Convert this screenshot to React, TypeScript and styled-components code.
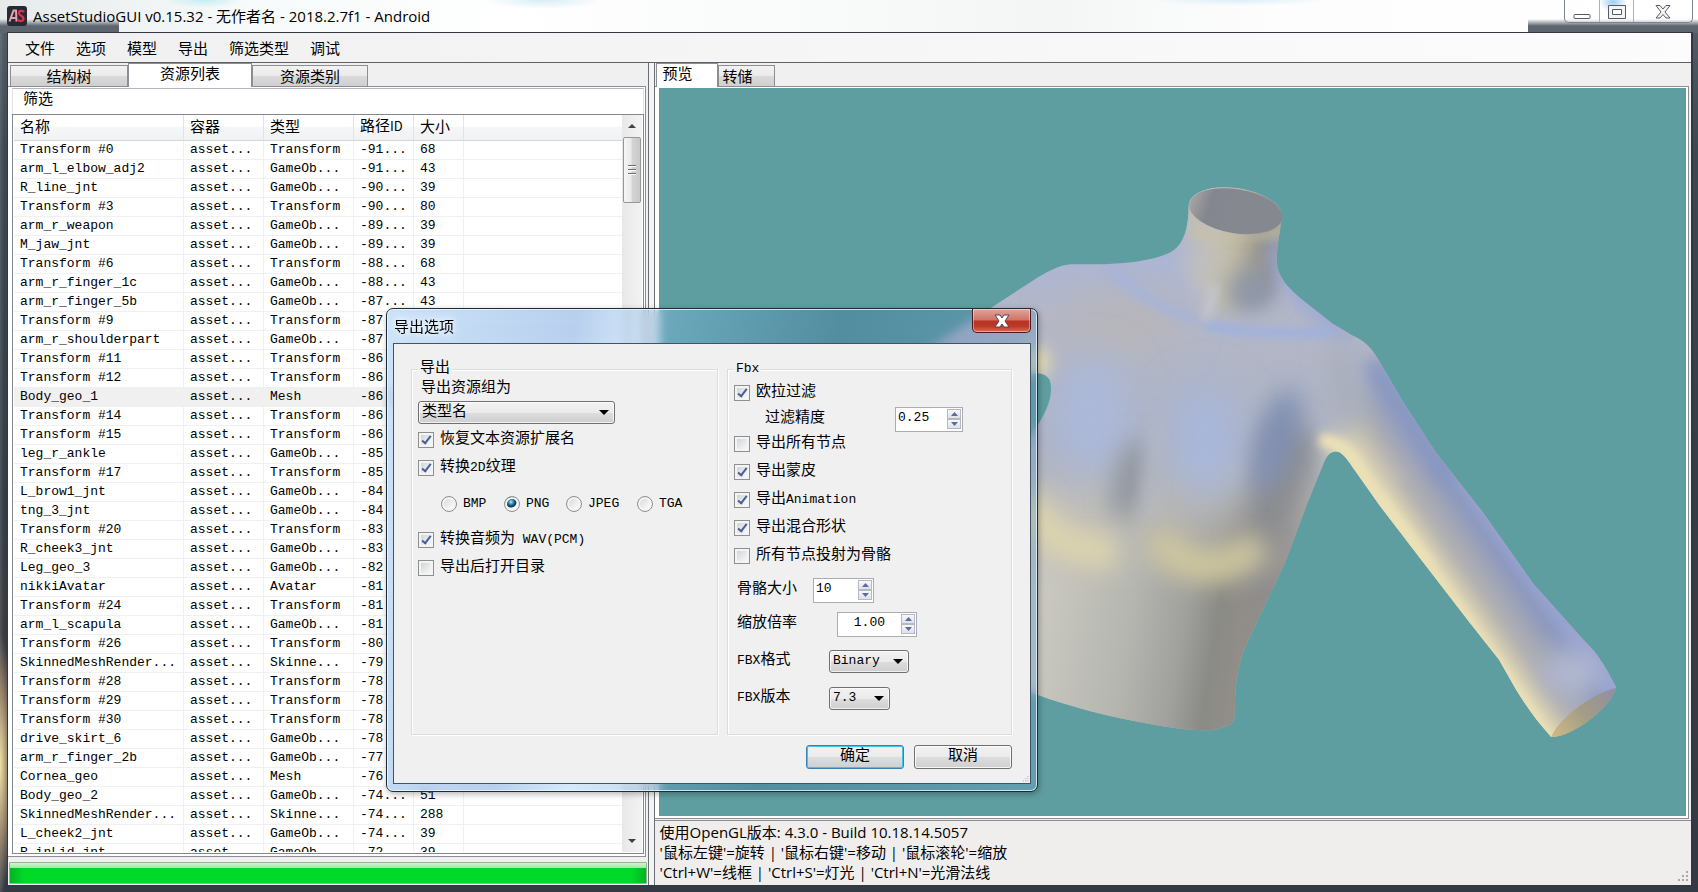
import React from 'react';
import styled, { createGlobalStyle, css } from 'styled-components';

const uiFont = `"Open Sans", "Noto Sans CJK SC", sans-serif`;
const gridFont = `"Liberation Mono", "Noto Sans CJK SC", monospace`;

const GlobalStyle = createGlobalStyle`
  *, *::before, *::after { box-sizing: border-box; }
  body { margin: 0; background: #3b454f; color: #000; font-family: ${gridFont}; font-size: 13px; }
  button, input, select { font: inherit; color: inherit; margin: 0; }
`;

const Desktop = styled.div`
  position: relative;
  display: flex;
  flex-direction: column;
  height: 100vh;
  min-height: 800px;
  padding: 0 5px 6px 7px;
  overflow: hidden;
  background:
    radial-gradient(ellipse 14px 130px at 0 765px, #efe3a6, rgba(190, 160, 120, 0.7) 55%, transparent),
    linear-gradient(90deg, rgba(255, 255, 255, 0.12), transparent 4px),
    linear-gradient(180deg, #56616a 0, #3c4852 150px, #323d48 500px, #3a3b42 620px, #333a44 100%);
`;

const TitleGlass = styled.div`
  position: absolute;
  inset: 0 0 auto 0;
  height: 33px;
  background:
    radial-gradient(ellipse 40px 8px at 12% 0, #c4eef2, transparent),
    radial-gradient(ellipse 60px 9px at 32% 0, #d6eef4, transparent),
    radial-gradient(ellipse 90px 6px at 73% 0, #dceff6, transparent),
    radial-gradient(ellipse 14px 10px at 95% 2px, #6fb4ee, transparent),
    linear-gradient(90deg, #e6eaeb 0, #f6fafa 14%, #ffffff 30%, #f4f6f6 62%, #fdfdfd 75%, #ffffff 100%);
  &::before, &::after {
    content: '';
    position: absolute;
    bottom: 0;
    height: 14px;
    background: linear-gradient(180deg, rgba(85, 94, 102, 0), #5d666e 50%);
  }
  &::before { left: 0; width: 119px; }
  &::after { right: 0; width: 170px; }
`;

const TitleBar = styled.header`
  position: relative;
  display: flex;
  align-items: flex-start;
  flex: 0 0 32px;
`;

const Title = styled.h1`
  flex: 1;
  display: flex;
  align-items: center;
  gap: 6px;
  height: 32px;
  margin: 0;
  font: 400 15px/20px ${uiFont};
  white-space: nowrap;
`;

const WindowButtons = styled.div`
  display: flex;
  height: 23px;
  border: 1px solid #7b828b;
  border-top: 0;
  border-radius: 0 0 5px 5px;
  background: rgba(255, 255, 255, 0.35);
  overflow: hidden;
`;

const WindowButton = styled.button<{ $wide?: boolean }>`
  width: ${p => (p.$wide ? 59 : 34)}px;
  padding: 0;
  border: 0;
  border-left: 1px solid #a9b1ba;
  background: transparent;
  &:first-child { border-left: 0; }
  svg { display: block; margin: 0 auto; }
`;

const Client = styled.div`
  position: relative;
  flex: 1;
  min-height: 0;
  display: flex;
  flex-direction: column;
  border: 1px solid #32383e;
  border-right-width: 2px;
  background: #f0f0f0;
`;

const MenuBar = styled.nav`
  display: flex;
  align-items: center;
  flex: 0 0 30px;
  gap: 21px;
  padding-left: 17px;
  border-bottom: 1px solid #5e6165;
  background: linear-gradient(90deg, #f0f0f0, #fcfcfc);
`;

const MenuItem = styled.button`
  padding: 0;
  border: 0;
  background: none;
  font: 15px/20px "Noto Sans CJK SC", sans-serif;
`;

const Split = styled.main`
  flex: 1;
  min-height: 0;
  display: grid;
  grid-template-columns: minmax(0, 641fr) minmax(0, 1038fr);
  gap: 5px;
  background: #f4f4f4;
`;

const Pane = styled.section<{ $side: 'left' | 'right' }>`
  display: flex;
  flex-direction: column;
  min-height: 0;
  background: #f0f0f0;
  ${p => (p.$side === 'left'
    ? css`border-right: 1px solid #6b6e72;`
    : css`border-left: 1px solid #6b6e72;`)}
`;

const TabStrip = styled.div<{ $inset?: boolean }>`
  display: flex;
  align-items: flex-end;
  flex: 0 0 23px;
  padding-left: ${p => (p.$inset ? 2 : 1)}px;
`;

const Tab = styled.button<{ $active?: boolean; $width: number; $left?: boolean }>`
  width: ${p => p.$width}px;
  height: ${p => (p.$active ? 24 : 21)}px;
  padding: ${p => (p.$active ? '0 6px 5px' : '0 4px 1px')};
  border: 1px solid #8c8e94;
  border-bottom: 0;
  font: 15px/18px "Noto Sans CJK SC", sans-serif;
  text-align: ${p => (p.$left ? 'left' : 'center')};
  background: ${p => (p.$active ? '#fff' : 'linear-gradient(180deg, #f2f2f2, #ebebeb 50%, #dadada 52%, #cfcfcf)')};
  position: relative;
  z-index: ${p => (p.$active ? 1 : 0)};
  margin-bottom: ${p => (p.$active ? -1 : 0)}px;
`;

const ListPanel = styled.div`
  flex: 1;
  min-height: 0;
  display: flex;
  flex-direction: column;
  margin-right: 2px;
  padding: 1px 1px 2px 4px;
  border: 1px solid #8c8e94;
  border-left: 0;
  background: #fff;
`;

const FilterBox = styled.input`
  flex: 0 0 25px;
  width: 100%;
  padding: 0 10px 7px;
  border: 0;
  border-top: 1px solid #b4b8be;
  border-left: 1px solid #e2e3ea;
  border-right: 1px solid #e2e3ea;
  outline: 0;
  background: #fff;
  && { font: 15px/18px "Noto Sans CJK SC", sans-serif; }
  &::placeholder { color: #000; opacity: 1; }
`;

const ListView = styled.div`
  flex: 1;
  min-height: 0;
  display: flex;
  border: 1px solid #828790;
  padding: 0 1px 1px;
`;

const TableClip = styled.div`
  flex: 1;
  min-width: 0;
  overflow: hidden;
`;

const AssetTable = styled.table`
  width: 100%;
  table-layout: fixed;
  border-collapse: separate;
  border-spacing: 0;
`;

const HeadCell = styled.th`
  height: 26px;
  padding: 0 6px 4px;
  border-right: 1px solid #e0e3e8;
  border-bottom: 1px solid #d5d5d5;
  background: linear-gradient(180deg, #fff 0, #fff 45%, #f5f6f8 50%, #f1f2f4 100%);
  font: 400 15px/20px "Noto Sans CJK SC", sans-serif;
  text-align: left;
  white-space: nowrap;
  &:last-child { border-right: 0; }
`;

const Row = styled.tr<{ $selected?: boolean }>`
  background: ${p => (p.$selected ? '#f0f0f0' : '#fff')};
`;

const Cell = styled.td`
  height: 19px;
  padding: 0 0 0 6px;
  border-right: 1px solid #f0f0f0;
  border-bottom: 1px solid #f0f0f0;
  line-height: 18px;
  white-space: nowrap;
  overflow: hidden;
  &:last-child { border-right: 0; }
`;

const ScrollTrack = styled.div`
  flex: 0 0 20px;
  display: flex;
  flex-direction: column;
  align-items: center;
  background: linear-gradient(90deg, #e8e8e8, #f3f3f3);
`;

const ScrollArrow = styled.button`
  width: 18px;
  height: 22px;
  padding: 0;
  border: 0;
  background: none;
  svg { display: block; margin: 0 auto; }
`;

const ScrollThumb = styled.div`
  display: flex;
  flex-direction: column;
  justify-content: center;
  align-items: center;
  gap: 2px;
  width: 18px;
  height: 66px;
  margin-bottom: auto;
  border: 1px solid #979797;
  border-radius: 2px;
  background: linear-gradient(90deg, #f6f6f6, #e9e9e9 45%, #d4d4d4 50%, #c9c9cb);
`;

const Grip = styled.span`
  width: 8px;
  height: 2px;
  border-top: 1px solid #6c6c6c;
  background: #fff;
`;

const ProgressBar = styled.div`
  flex: 0 0 22px;
  margin: 5px 1px 1px;
  border: 1px solid #8fb88f;
  border-radius: 1px;
  background:
    linear-gradient(180deg, #d3f5d3 0, #9ceb9f 5px, transparent 5px),
    linear-gradient(90deg, #05b322, #00d928 14px, #00d928 calc(100% - 14px), #05b322);
`;

const Viewport = styled.div`
  flex: 1;
  min-height: 0;
  display: flex;
  margin-right: 2px;
  border: 1px solid #8c8e94;
  border-left: 0;
  padding: 1px 2px 2px 4px;
  background: #fff;
  svg { display: block; flex: 1; min-width: 0; height: 100%; background: #5f9ea0; }
`;

const StatusBox = styled.output`
  position: relative;
  flex: 0 0 65px;
  margin-top: 1px;
  padding: 1px 5px;
  border-top: 1px solid #8c8e94;
  background: #f0eeed;
  font: 15px/20px ${uiFont};
  white-space: pre-line;
  svg { position: absolute; right: 2px; bottom: 3px; }
`;

const Dialog = styled.form`
  position: absolute;
  left: 386px;
  top: 308px;
  width: 652px;
  padding: 0 6px 7px;
  border: 1px solid #1f2c38;
  border-radius: 7px;
  background: linear-gradient(100deg, rgba(130, 185, 240, 0.4), rgba(80, 140, 215, 0.4) 26%, rgba(140, 195, 245, 0.35) 36%, rgba(60, 110, 160, 0.35) 62%, rgba(110, 160, 205, 0.35));
  backdrop-filter: blur(5px);
  box-shadow: inset 0 0 0 1px rgba(235, 248, 255, 0.8), 1px 2px 6px rgba(0, 0, 0, 0.3);
`;

const DialogTitle = styled.div`
  display: flex;
  justify-content: space-between;
  height: 34px;
  h2 {
    margin: 0 1px;
    font: 400 15px/34px "Noto Sans CJK SC", sans-serif;
    text-shadow: 0 0 8px #fff, 0 0 8px #fff;
  }
`;

const CloseButton = styled.button`
  width: 59px;
  height: 24px;
  padding: 0;
  border: 1px solid #4a1c20;
  border-top: 0;
  border-radius: 0 0 5px 5px;
  background: linear-gradient(180deg, #e0a69c 0, #cf7265 48%, #bb3222 52%, #b93a29 75%, #d86d50 100%);
  box-shadow: inset 0 0 0 1px rgba(255, 255, 255, 0.4);
  svg { display: block; margin: 0 auto; }
`;

const DialogBody = styled.div`
  position: relative;
  padding: 16px 18px 14px 17px;
  border: 1px solid #3f5468;
  background: #f0f0f0;
  > svg { position: absolute; right: 1px; bottom: 1px; }
`;

const Groups = styled.div`
  display: grid;
  grid-template-columns: 307fr 285fr;
  gap: 9px;
`;

const Group = styled.fieldset`
  min-width: 0;
  margin: 0;
  padding: 0 6px 22px;
  border: 1px solid #dcdcdc;
  box-shadow: inset 1px 1px 0 #fff, 1px 1px 0 #fff;
  font: 15px/18px ${gridFont};
  legend { padding: 0 2px; line-height: 18px; background: #f0f0f0; }
`;

const Line = styled.div<{ $h: number; $indent?: number }>`
  display: flex;
  align-items: center;
  height: ${p => p.$h}px;
  padding-left: ${p => p.$indent ?? 0}px;
`;

const FieldLabel = styled.label<{ $w?: number }>`
  flex: 0 0 ${p => (p.$w ? `${p.$w}px` : 'auto')};
  white-space: nowrap;
`;

const CheckLabel = styled.label`
  display: flex;
  align-items: center;
  gap: 6px;
  white-space: nowrap;
`;

const Latin = styled.span`
  font-size: 13px;
`;

const CheckBox = styled.input.attrs({ type: 'checkbox' })`
  appearance: none;
  position: relative;
  width: 16px;
  height: 16px;
  border: 1px solid #8e8f8f;
  background: linear-gradient(135deg, #c9ced4, #f6f6f6 80%);
  box-shadow: inset 0 0 0 2px #f4f4f4;
  &:checked::after {
    content: '';
    position: absolute;
    left: 5px;
    top: 1px;
    width: 5px;
    height: 10px;
    border: solid #4a5f97;
    border-width: 0 2px 2px 0;
    transform: rotate(38deg);
  }
`;

const Radio = styled.input.attrs({ type: 'radio' })`
  appearance: none;
  width: 16px;
  height: 16px;
  border: 1px solid #8e8f8f;
  border-radius: 50%;
  background: linear-gradient(135deg, #d0d3d7, #f8f8f8 75%);
  box-shadow: inset 0 0 0 2px #f4f4f4;
  &:checked {
    background: radial-gradient(circle at 6px 5px, #b8ecfa 0, #3f9dc4 2px, #144a6b 4px, #0f3450 5px, #f4f4f4 6px);
  }
`;

const RadioRow = styled.div`
  display: grid;
  grid-template-columns: 63px 62px 71px auto;
  align-items: center;
  height: 44px;
  padding-left: 23px;
`;

const SelectWrap = styled.span<{ $w: number }>`
  position: relative;
  display: block;
  width: ${p => p.$w}px;
  svg { position: absolute; right: 6px; top: 9px; pointer-events: none; }
`;

const Select = styled.select<{ $latin?: boolean }>`
  appearance: none;
  display: block;
  width: 100%;
  height: 23px;
  padding: 0 3px;
  border: 1px solid #707070;
  border-radius: 3px;
  background: linear-gradient(180deg, #f2f2f2, #ebebeb 50%, #dddddd 52%, #cfcfcf);
  box-shadow: inset 0 0 0 1px rgba(255, 255, 255, 0.7);
  && { font-size: ${p => (p.$latin ? 13 : 15)}px; line-height: 20px; }
`;

const SpinBox = styled.span<{ $w: number }>`
  display: flex;
  width: ${p => p.$w}px;
  height: 25px;
  padding: 1px;
  border: 1px solid #abadb3;
  background: #fff;
`;

const SpinInput = styled.input<{ $right?: boolean }>`
  flex: 1;
  min-width: 0;
  height: 18px;
  padding: 0 ${p => (p.$right ? 16 : 1)}px 0 1px;
  border: 0;
  outline: 0;
  background: none;
  text-align: ${p => (p.$right ? 'right' : 'left')};
  && { font-size: 13px; }
`;

const SpinButtons = styled.span`
  display: flex;
  flex-direction: column;
  width: 14px;
`;

const SpinButton = styled.button`
  height: 10px;
  padding: 0;
  border: 1px solid #b5b9c4;
  background: linear-gradient(180deg, #f8f8fa, #dfe1ea);
  svg { display: block; margin: 0 auto; }
`;

const DialogActions = styled.div`
  display: flex;
  justify-content: flex-end;
  gap: 10px;
  margin-top: 10px;
`;

const ActionButton = styled.button<{ $primary?: boolean }>`
  width: 98px;
  height: 24px;
  padding: 0;
  border: 1px solid ${p => (p.$primary ? '#3c7fb1' : '#707070')};
  border-radius: 3px;
  background: linear-gradient(180deg, #f2f2f2, #ebebeb 50%, #dddddd 52%, #cfcfcf);
  box-shadow: inset 0 0 0 ${p => (p.$primary ? '1px #3fc4ee' : '1px rgba(255, 255, 255, 0.8)')};
  && { font-size: 15px; line-height: 20px; }
`;

type Asset = [name: string, type: string, path: string, size: string];

const assets: Asset[] = [
  ['Transform #0', 'Transform', '-91...', '68'],
  ['arm_l_elbow_adj2', 'GameOb...', '-91...', '43'],
  ['R_line_jnt', 'GameOb...', '-90...', '39'],
  ['Transform #3', 'Transform', '-90...', '80'],
  ['arm_r_weapon', 'GameOb...', '-89...', '39'],
  ['M_jaw_jnt', 'GameOb...', '-89...', '39'],
  ['Transform #6', 'Transform', '-88...', '68'],
  ['arm_r_finger_1c', 'GameOb...', '-88...', '43'],
  ['arm_r_finger_5b', 'GameOb...', '-87...', '43'],
  ['Transform #9', 'Transform', '-87', ''],
  ['arm_r_shoulderpart', 'GameOb...', '-87', ''],
  ['Transform #11', 'Transform', '-86', ''],
  ['Transform #12', 'Transform', '-86', ''],
  ['Body_geo_1', 'Mesh', '-86', ''],
  ['Transform #14', 'Transform', '-86', ''],
  ['Transform #15', 'Transform', '-86', ''],
  ['leg_r_ankle', 'GameOb...', '-85', ''],
  ['Transform #17', 'Transform', '-85', ''],
  ['L_brow1_jnt', 'GameOb...', '-84', ''],
  ['tng_3_jnt', 'GameOb...', '-84', ''],
  ['Transform #20', 'Transform', '-83', ''],
  ['R_cheek3_jnt', 'GameOb...', '-83', ''],
  ['Leg_geo_3', 'GameOb...', '-82', ''],
  ['nikkiAvatar', 'Avatar', '-81', ''],
  ['Transform #24', 'Transform', '-81', ''],
  ['arm_l_scapula', 'GameOb...', '-81', ''],
  ['Transform #26', 'Transform', '-80', ''],
  ['SkinnedMeshRender...', 'Skinne...', '-79', ''],
  ['Transform #28', 'Transform', '-78', ''],
  ['Transform #29', 'Transform', '-78', ''],
  ['Transform #30', 'Transform', '-78', ''],
  ['drive_skirt_6', 'GameOb...', '-78', ''],
  ['arm_r_finger_2b', 'GameOb...', '-77', ''],
  ['Cornea_geo', 'Mesh', '-76', ''],
  ['Body_geo_2', 'GameOb...', '-74...', '51'],
  ['SkinnedMeshRender...', 'Skinne...', '-74...', '288'],
  ['L_cheek2_jnt', 'GameOb...', '-74...', '39'],
  ['R_inLid_jnt', 'GameOb...', '-72...', '39'],
];

function Mixed({ text }: { text: string }) {
  return (
    <span>
      {text.split(/([\x20-\x7e]+)/).map((part, i) => (i % 2 ? <Latin key={i}>{part}</Latin> : part))}
    </span>
  );
}

function Check({ text, checked }: { text: string; checked?: boolean }) {
  return (
    <CheckLabel>
      <CheckBox defaultChecked={checked} />
      <Mixed text={text} />
    </CheckLabel>
  );
}

function Triangle({ up, w = 9, fill = '#000' }: { up?: boolean; w?: number; fill?: string }) {
  const h = Math.ceil(w / 2);
  return (
    <svg width={w} height={h} aria-hidden="true">
      <path d={up ? `M0 ${h}L${w / 2} 0L${w} ${h}Z` : `M0 0H${w}L${w / 2} ${h}Z`} fill={fill} />
    </svg>
  );
}

function DropDown({ id, value, width, latin }: { id: string; value: string; width: number; latin?: boolean }) {
  return (
    <SelectWrap $w={width}>
      <Select id={id} $latin={latin} defaultValue={value}>
        <option>{value}</option>
      </Select>
      <Triangle w={10} />
    </SelectWrap>
  );
}

function Spinner({ id, value, width, right }: { id: string; value: string; width: number; right?: boolean }) {
  return (
    <SpinBox $w={width}>
      <SpinInput id={id} defaultValue={value} $right={right} />
      <SpinButtons>
        <SpinButton type="button" aria-label="+"><Triangle up w={7} fill="#5a6aa4" /></SpinButton>
        <SpinButton type="button" aria-label="-"><Triangle w={7} fill="#5a6aa4" /></SpinButton>
      </SpinButtons>
    </SpinBox>
  );
}

function SizeGrip({ color = '#a8a8a8', size = 11 }: { color?: string; size?: number }) {
  const dots = [[8, 0], [4, 4], [8, 4], [0, 8], [4, 8], [8, 8]];
  return (
    <svg width={size} height={size} viewBox="0 0 11 11" aria-hidden="true">
      {dots.map(([x, y]) => <rect key={`${x}-${y}`} x={x} y={y} width="2" height="2" fill={color} />)}
    </svg>
  );
}

function AppLogo() {
  return (
    <svg width="20" height="20" viewBox="0 0 20 20" aria-hidden="true">
      <rect width="20" height="20" rx="3" fill="#262a33" />
      <path d="M2.5 15.5L6.5 4.5H9L9.5 15.5M4 12H9" fill="none" stroke="#e8a0ad" strokeWidth="2" />
      <path d="M17 6C15.500 4 11.500 4.500 12 7.500C12.500 10 16.500 9.500 16.500 12.500C16.500 15.500 12 15.800 10.800 13.500" fill="none" stroke="#e02f4e" strokeWidth="2.200" />
    </svg>
  );
}

const torsoPath =
  'M1189 205C1189 228 1184 243 1174 250C1158 260 1130 263 1105 264H1071C1058 265 1048 272 1040 276L991 308L880 380V460L1000 440L1020 600V688L1038 694C1070 706 1110 716 1149 723C1175 728 1195 730 1212 729C1228 727 1235 723 1235 714C1235 695 1236 680 1239 666C1243 650 1247 643 1252 632L1286 560L1307 504L1324 462C1328 452 1334 449 1340 452C1346 456 1350 463 1355 470L1379 504L1422 560L1469 621L1499 659L1516 689C1527 707 1538 722 1551 736C1570 736 1608 710 1616 687C1608 672 1600 655 1584 640L1533 583L1482 511L1435 451L1401 398L1377 357C1372 348 1364 340 1352 335L1332 323L1303 300C1288 288 1277 275 1277 262C1276 250 1280 235 1282 215C1280 195 1235 182 1208 189C1194 193 1190 198 1189 205Z';

function SoftBlur({ level }: { level: number }) {
  return (
    <filter id={`b${level}`} filterUnits="userSpaceOnUse" x="800" y="100" width="900" height="720">
      <feGaussianBlur stdDeviation={level} />
    </filter>
  );
}

function TorsoPreview() {
  return (
    <svg viewBox="659 88 1028 727" preserveAspectRatio="xMidYMid slice" role="img">
      <defs>
        <linearGradient id="base" gradientUnits="userSpaceOnUse" x1="0" y1="250" x2="0" y2="730">
          <stop offset="0" stopColor="#abb5d5" />
          <stop offset="0.14" stopColor="#b4b7c6" />
          <stop offset="0.4" stopColor="#adb3c4" />
          <stop offset="0.54" stopColor="#bcbbb8" />
          <stop offset="1" stopColor="#b3b2b0" />
        </linearGradient>
        <linearGradient id="side" gradientUnits="userSpaceOnUse" x1="1040" y1="600" x2="1240" y2="632">
          <stop offset="0" stopColor="#cac8c1" />
          <stop offset="0.45" stopColor="#b5b6b0" />
          <stop offset="0.72" stopColor="#a0a19d" />
          <stop offset="0.88" stopColor="#8a8b86" />
          <stop offset="1" stopColor="#918d88" />
        </linearGradient>
        <linearGradient id="fade" gradientUnits="userSpaceOnUse" x1="0" y1="470" x2="0" y2="590">
          <stop offset="0" stopColor="#000" />
          <stop offset="1" stopColor="#fff" />
        </linearGradient>
        <mask id="lower" maskUnits="userSpaceOnUse" x="860" y="180" width="800" height="600">
          <rect x="860" y="180" width="800" height="600" fill="url(#fade)" />
        </mask>
        <linearGradient id="neck" gradientUnits="userSpaceOnUse" x1="1182" y1="250" x2="1280" y2="262">
          <stop offset="0" stopColor="#b5b9ca" />
          <stop offset="0.3" stopColor="#c4c1ba" />
          <stop offset="0.55" stopColor="#c0bba3" />
          <stop offset="0.75" stopColor="#969590" />
          <stop offset="1" stopColor="#9294a0" />
        </linearGradient>
        <linearGradient id="arm" gradientUnits="userSpaceOnUse" x1="1422" y1="560" x2="1486" y2="515">
          <stop offset="0" stopColor="#eee3ba" />
          <stop offset="0.16" stopColor="#d8cfb2" />
          <stop offset="0.36" stopColor="#b4b3b0" />
          <stop offset="0.62" stopColor="#a0a5b6" />
          <stop offset="0.84" stopColor="#8a98be" />
          <stop offset="1" stopColor="#98a3cf" />
        </linearGradient>
        <linearGradient id="cuff" gradientUnits="userSpaceOnUse" x1="1555" y1="733" x2="1612" y2="690">
          <stop offset="0" stopColor="#c9b885" />
          <stop offset="0.5" stopColor="#a39c85" />
          <stop offset="1" stopColor="#9290a0" />
        </linearGradient>
        <linearGradient id="hollow" gradientUnits="userSpaceOnUse" x1="1189" y1="205" x2="1230" y2="212">
          <stop offset="0" stopColor="#a9a5a0" />
          <stop offset="0.5" stopColor="#83868f" />
          <stop offset="1" stopColor="#85888f" />
        </linearGradient>
        {[4, 8, 12, 20].map(level => <SoftBlur key={level} level={level} />)}
        <clipPath id="torso"><path d={torsoPath} /></clipPath>
      </defs>
      <g clipPath="url(#torso)">
        <rect x="860" y="170" width="800" height="600" fill="url(#base)" />
        <g mask="url(#lower)"><rect x="860" y="460" width="460" height="290" fill="url(#side)" /></g>
        <ellipse cx="1120" cy="325" rx="60" ry="30" fill="#b8b6ba" filter="url(#b20)" />
        <ellipse cx="1092" cy="415" rx="36" ry="58" fill="#abb9db" filter="url(#b20)" />
        <ellipse cx="1130" cy="480" rx="15" ry="42" fill="#8f949d" filter="url(#b12)" transform="rotate(14 1130 480)" />
        <path d="M1262 430Q1300 400 1318 455L1262 610L1235 560Z" fill="#8c8d90" filter="url(#b12)" />
        <ellipse cx="1276" cy="440" rx="20" ry="54" fill="#8190b3" filter="url(#b12)" transform="rotate(18 1276 440)" />
        <ellipse cx="1205" cy="440" rx="32" ry="56" fill="#a8b7dc" filter="url(#b20)" />
        <path d="M1020 500Q1066 560 1116 548" fill="none" stroke="#dcd4ae" strokeWidth="34" filter="url(#b12)" />
        <path d="M1156 536Q1198 590 1262 544" fill="none" stroke="#cfc79e" strokeWidth="32" filter="url(#b12)" />
        <path d="M1160 425Q1150 470 1150 515" fill="none" stroke="#b9bcc6" strokeWidth="12" opacity="0.8" filter="url(#b8)" />
        <path d="M1180 180H1290V250L1270 300L1216 312L1180 270Z" fill="url(#neck)" filter="url(#b8)" />
        <path d="M1186 205Q1210 240 1240 236Q1270 234 1284 214V240H1190Z" fill="#c9c29f" opacity="0.55" filter="url(#b4)" />
        <ellipse cx="1250" cy="290" rx="22" ry="20" fill="#8d96ab" filter="url(#b12)" />
        <path d="M1278 245Q1284 290 1350 338" fill="none" stroke="#98a7d8" strokeWidth="16" opacity="0.85" filter="url(#b8)" />
        <path d="M1110 268Q1150 306 1196 320" fill="none" stroke="#a2b3df" strokeWidth="9" opacity="0.8" filter="url(#b4)" />
        <path d="M1205 325Q1260 335 1330 332" fill="none" stroke="#a0b1de" strokeWidth="10" filter="url(#b4)" />
        <path d="M1216 285L1206 318" stroke="#c2c6d0" strokeWidth="8" filter="url(#b4)" />
        <path d="M1330 455L1356 400L1376 350L1640 690L1551 750Z" fill="url(#arm)" filter="url(#b12)" />
        <path d="M1375 498L1440 455L1640 690L1551 745L1470 625Z" fill="url(#arm)" filter="url(#b4)" />
        <ellipse cx="1345" cy="385" rx="16" ry="42" fill="#aaafbc" filter="url(#b12)" transform="rotate(-10 1345 385)" />
        <path d="M1372 362Q1392 390 1405 414L1450 482" fill="none" stroke="#8696c0" strokeWidth="16" filter="url(#b8)" />
        <ellipse cx="1572" cy="672" rx="30" ry="24" fill="#b0b7cf" filter="url(#b12)" />
        <path d="M1320 440Q1338 440 1352 458L1382 504L1430 568" fill="none" stroke="#ece1b6" strokeWidth="14" filter="url(#b4)" />
        <path d="M1550 742L1512 686L1468 622L1430 570" fill="none" stroke="#ece1b6" strokeWidth="10" filter="url(#b4)" />
        <ellipse cx="1038" cy="362" rx="12" ry="16" fill="#e6dcae" filter="url(#b8)" />
      </g>
      <ellipse cx="1236" cy="211" rx="47" ry="22" transform="rotate(9 1236 211)" fill="url(#hollow)" />
      <path d="M1551 736C1560 715 1595 692 1616 687C1612 706 1570 738 1551 736Z" fill="url(#cuff)" />
      <path d="M1020 380Q1040 366 1050 379Q1056 397 1038 425L1000 480Z" fill="#5f9ea0" />
    </svg>
  );
}

function ExportDialog() {
  return (
    <Dialog role="dialog" aria-labelledby="export-title" onSubmit={e => e.preventDefault()}>
      <DialogTitle>
        <h2 id="export-title">导出选项</h2>
        <CloseButton type="button" aria-label="关闭">
          <svg width="16" height="14" viewBox="0 0 16 14">
            <path d="M1 1H6L8 4L10 1H15L11 7L15 13H10L8 10L6 13H1L5 7Z" fill="#fff" stroke="#5a4650" />
          </svg>
        </CloseButton>
      </DialogTitle>
      <DialogBody>
        <Groups>
          <Group>
            <legend>导出</legend>
            <Line $h={21} $indent={3}><FieldLabel htmlFor="group-by">导出资源组为</FieldLabel></Line>
            <Line $h={27}><DropDown id="group-by" value="类型名" width={197} /></Line>
            <Line $h={28}><Check text="恢复文本资源扩展名" checked /></Line>
            <Line $h={28}><Check text="转换2D纹理" checked /></Line>
            <RadioRow>
              {['BMP', 'PNG', 'JPEG', 'TGA'].map(format => (
                <CheckLabel key={format}>
                  <Radio name="format" defaultChecked={format === 'PNG'} />
                  <Latin>{format}</Latin>
                </CheckLabel>
              ))}
            </RadioRow>
            <Line $h={28}><Check text="转换音频为 WAV(PCM)" checked /></Line>
            <Line $h={28}><Check text="导出后打开目录" /></Line>
          </Group>
          <Group>
            <legend><Latin>Fbx</Latin></legend>
            <Line $h={30}><Check text="欧拉过滤" checked /></Line>
            <Line $h={22} $indent={31}>
              <FieldLabel htmlFor="precision" $w={130}>过滤精度</FieldLabel>
              <Spinner id="precision" value="0.25" width={68} />
            </Line>
            <Line $h={28}><Check text="导出所有节点" /></Line>
            <Line $h={28}><Check text="导出蒙皮" checked /></Line>
            <Line $h={28}><Check text="导出Animation" checked /></Line>
            <Line $h={28}><Check text="导出混合形状" checked /></Line>
            <Line $h={28}><Check text="所有节点投射为骨骼" /></Line>
            <Line $h={40} $indent={3}>
              <FieldLabel htmlFor="bone-size" $w={76}>骨骼大小</FieldLabel>
              <Spinner id="bone-size" value="10" width={61} />
            </Line>
            <Line $h={28} $indent={3}>
              <FieldLabel htmlFor="scale" $w={100}>缩放倍率</FieldLabel>
              <Spinner id="scale" value="1.00" width={80} right />
            </Line>
            <Line $h={46} $indent={3}>
              <FieldLabel htmlFor="fbx-format" $w={92}><Mixed text="FBX格式" /></FieldLabel>
              <DropDown id="fbx-format" value="Binary" width={80} latin />
            </Line>
            <Line $h={28} $indent={3}>
              <FieldLabel htmlFor="fbx-version" $w={92}><Mixed text="FBX版本" /></FieldLabel>
              <DropDown id="fbx-version" value="7.3" width={61} latin />
            </Line>
          </Group>
        </Groups>
        <DialogActions>
          <ActionButton type="submit" $primary>确定</ActionButton>
          <ActionButton type="button">取消</ActionButton>
        </DialogActions>
        <SizeGrip color="#b4b4b4" size={6} />
      </DialogBody>
    </Dialog>
  );
}

export default function App() {
  return (
    <Desktop>
      <GlobalStyle />
      <TitleGlass />
      <TitleBar>
        <Title><AppLogo />AssetStudioGUI v0.15.32 - 无作者名 - 2018.2.7f1 - Android</Title>
        <WindowButtons>
          <WindowButton aria-label="最小化">
            <svg width="18" height="16"><rect x="1" y="11.500" width="16" height="4" rx="1" fill="#fff" stroke="#555b66" /></svg>
          </WindowButton>
          <WindowButton aria-label="最大化">
            <svg width="18" height="16">
              <path d="M0.500 2.500H17.500V15.500H0.500ZM4.500 6.500V11.500H13.500V6.500Z" fill="#f2f4f6" fillRule="evenodd" stroke="#555b66" />
            </svg>
          </WindowButton>
          <WindowButton $wide aria-label="关闭">
            <svg width="18" height="16" viewBox="0 0 18 16">
              <path d="M2 2.500H6L9 6L12 2.500H16L11 9L16 15H12L9 11.500L6 15H2L7 9Z" fill="#f4f4f6" stroke="#555b66" />
            </svg>
          </WindowButton>
        </WindowButtons>
      </TitleBar>
      <Client>
        <MenuBar>
          {['文件', '选项', '模型', '导出', '筛选类型', '调试'].map(item => <MenuItem key={item}>{item}</MenuItem>)}
        </MenuBar>
        <Split>
          <Pane $side="left">
            <TabStrip $inset>
              <Tab $width={118}>结构树</Tab>
              <Tab $width={124} $active>资源列表</Tab>
              <Tab $width={116}>资源类别</Tab>
            </TabStrip>
            <ListPanel>
              <FilterBox placeholder="筛选" aria-label="筛选" />
              <ListView>
                <TableClip>
                  <AssetTable>
                    <colgroup>
                      <col width="170" />
                      <col width="80" />
                      <col width="90" />
                      <col width="60" />
                      <col width="50" />
                      <col />
                    </colgroup>
                    <thead>
                      <tr>
                        <HeadCell>名称</HeadCell>
                        <HeadCell>容器</HeadCell>
                        <HeadCell>类型</HeadCell>
                        <HeadCell><Mixed text="路径ID" /></HeadCell>
                        <HeadCell>大小</HeadCell>
                        <HeadCell />
                      </tr>
                    </thead>
                    <tbody>
                      {assets.map(([name, type, path, size]) => (
                        <Row key={name + path} $selected={name === 'Body_geo_1'}>
                          <Cell>{name}</Cell>
                          <Cell>asset...</Cell>
                          <Cell>{type}</Cell>
                          <Cell>{path}</Cell>
                          <Cell>{size}</Cell>
                          <Cell />
                        </Row>
                      ))}
                    </tbody>
                  </AssetTable>
                </TableClip>
                <ScrollTrack>
                  <ScrollArrow aria-label="向上"><Triangle up w={8} fill="#404040" /></ScrollArrow>
                  <ScrollThumb><Grip /><Grip /><Grip /></ScrollThumb>
                  <ScrollArrow aria-label="向下"><Triangle w={8} fill="#404040" /></ScrollArrow>
                </ScrollTrack>
              </ListView>
            </ListPanel>
            <ProgressBar role="progressbar" aria-valuenow={100} />
          </Pane>
          <Pane $side="right">
            <TabStrip>
              <Tab $width={62} $active $left>预览</Tab>
              <Tab $width={57} $left>转储</Tab>
            </TabStrip>
            <Viewport><TorsoPreview /></Viewport>
            <StatusBox>
              {`使用OpenGL版本: 4.3.0 - Build 10.18.14.5057
              '鼠标左键'=旋转 | '鼠标右键'=移动 | '鼠标滚轮'=缩放
              'Ctrl+W'=线框 | 'Ctrl+S'=灯光 | 'Ctrl+N'=光滑法线`}
              <SizeGrip />
            </StatusBox>
          </Pane>
        </Split>
      </Client>
      <ExportDialog />
    </Desktop>
  );
}
